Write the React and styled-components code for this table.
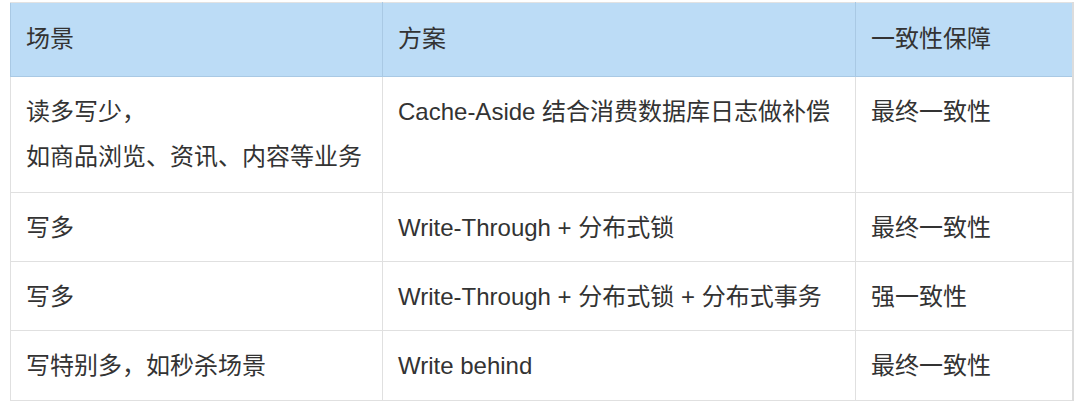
import React from 'react'
import styled, { createGlobalStyle } from 'styled-components'

const Global = createGlobalStyle`
  body {
    margin: 0;
    background: #fff;
    font-family: "Liberation Sans", "Noto Sans CJK SC", sans-serif;
  }
`

const Page = styled.div`
  padding: 2px 8px 0 10px;
`

const Table = styled.table`
  width: 1062px;
  border-collapse: collapse;
  table-layout: fixed;
  color: #333;
  font-size: 24px;
  line-height: 45px;
  border-right: 2px solid #dcdcdc;
`

const Row = styled.tr`
  height: ${(p) => p.$h}px;
`

const HeadCell = styled.th`
  background: #bcdcf6;
  border: 1px solid #a9c9e4;
  border-top-color: #e2e2e2;
  text-align: left;
  font-weight: normal;
  padding: 0 14px 2px 15px;
  vertical-align: middle;
`

const Cell = styled.td`
  border: 1px solid #e0e0e0;
  padding: 12px 14px 0 15px;
  vertical-align: top;
  white-space: nowrap;
`

const rows = [
  {
    scene: ['读多写少，', '如商品浏览、资讯、内容等业务'],
    plan: 'Cache-Aside 结合消费数据库日志做补偿',
    level: '最终一致性',
    h: 116,
  },
  { scene: ['写多'], plan: 'Write-Through + 分布式锁', level: '最终一致性', h: 69 },
  { scene: ['写多'], plan: 'Write-Through + 分布式锁 + 分布式事务', level: '强一致性', h: 69 },
  { scene: ['写特别多，如秒杀场景'], plan: 'Write behind', level: '最终一致性', h: 70 },
]

export default function App() {
  return (
    <Page>
      <Global />
      <Table>
        <colgroup>
          <col style={{ width: 372 }} />
          <col style={{ width: 473 }} />
          <col style={{ width: 217 }} />
        </colgroup>
        <thead>
          <Row $h={74}>
            <HeadCell>场景</HeadCell>
            <HeadCell>方案</HeadCell>
            <HeadCell>一致性保障</HeadCell>
          </Row>
        </thead>
        <tbody>
          {rows.map((r, i) => (
            <Row key={i} $h={r.h}>
              <Cell>
                {r.scene.map((line, j) => (
                  <div key={j}>{line}</div>
                ))}
              </Cell>
              <Cell>{r.plan}</Cell>
              <Cell>{r.level}</Cell>
            </Row>
          ))}
        </tbody>
      </Table>
    </Page>
  )
}
